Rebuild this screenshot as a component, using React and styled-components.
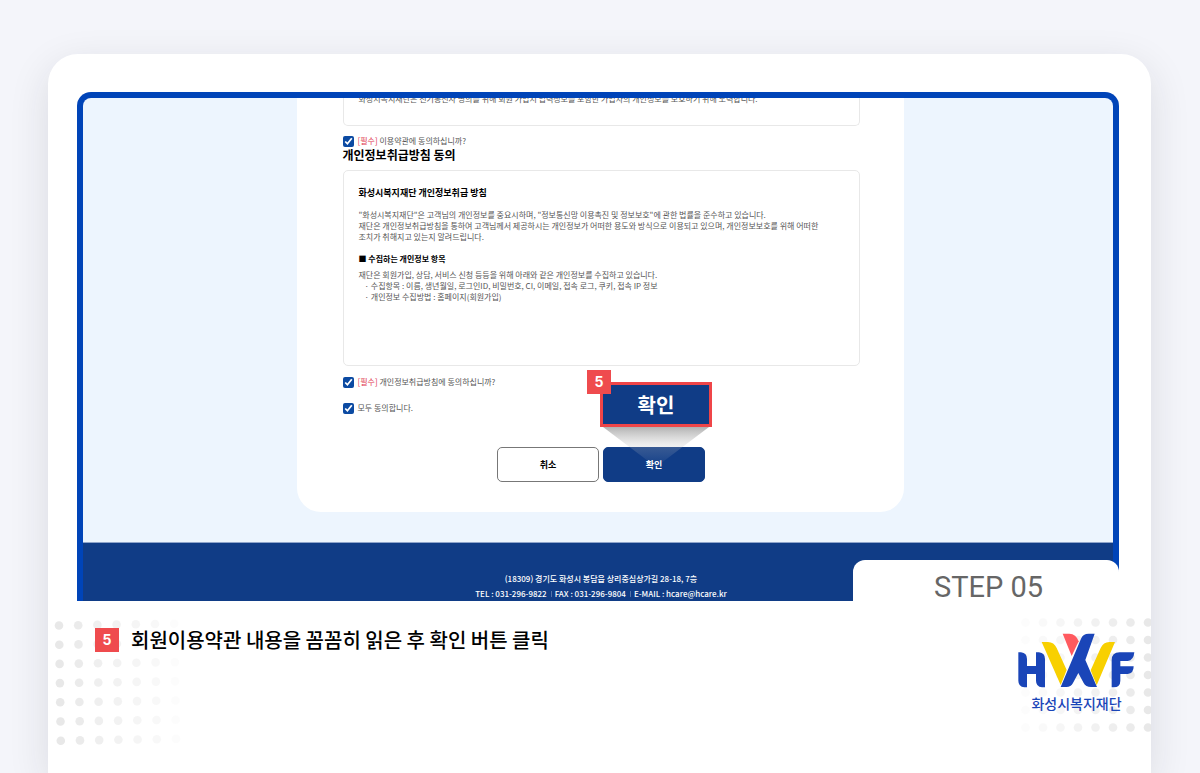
import React, { useState } from 'react';
import styled, { createGlobalStyle } from 'styled-components';

const GlobalStyle = createGlobalStyle`
  * {
    box-sizing: border-box;
  }
  body {
    margin: 0;
    background: #f4f5fa;
    font-family: 'Noto Sans CJK KR', 'Noto Sans', sans-serif;
    color: #000;
  }
  p, h2, h3, h4, ul {
    margin: 0;
    padding: 0;
    list-style: none;
  }
  button {
    font-family: inherit;
    padding: 0;
    cursor: pointer;
  }
`;

const Page = styled.main`
  padding: 54px 49px 0 48px;
  height: 100vh;
  overflow: hidden;
`;

const Card = styled.section`
  position: relative;
  min-height: 100%;
  padding-top: 38px;
  background: #fff;
  border-radius: 30px 30px 0 0;
  box-shadow: 0 12px 40px rgba(30, 30, 40, 0.12);
`;

const Dots = styled.svg`
  position: absolute;
  top: 562px;
  ${(props) => props.$side}: 0;
`;

const Screen = styled.div`
  position: relative;
  margin: 0 32px 0 29px;
  border: 6px solid #0044b8;
  border-bottom: 0;
  border-radius: 14px 14px 0 0;
  background: #0044b8;
`;

const ScreenBody = styled.div`
  display: flex;
  justify-content: center;
  padding: 0 0 30px 4px;
  background: #edf5fe;
  border-radius: 8px 8px 0 0;
`;

const Panel = styled.form`
  display: flex;
  flex-direction: column;
  width: 607px;
  padding: 0 44px 30px 46px;
  background: #fff;
  border-radius: 0 0 24px 24px;
`;

const Terms = styled.div`
  border: 1px solid #e8e8e8;
  border-radius: 5px;
  padding: 15px;
  font-size: 8px;
  line-height: 11px;
  color: #555;
`;

const TermsTail = styled(Terms)`
  display: flex;
  flex-direction: column;
  justify-content: flex-end;
  height: 28px;
  margin-bottom: 9px;
  padding-top: 0;
  padding-bottom: 21px;
  border-top: 0;
  border-radius: 0 0 5px 5px;
  overflow: hidden;
`;

const TermsFull = styled(Terms)`
  height: 196px;
  margin: 7px 0 10px;
`;

const SectionTitle = styled.h2`
  font-size: 12px;
  line-height: 16px;
`;

const TermsTitle = styled.h3`
  margin-bottom: 9px;
  font-size: 9px;
  line-height: 14px;
  color: #000;
`;

const TermsSubTitle = styled.h4`
  margin: 11px 0 5px;
  font-size: 8px;
  line-height: 11px;
  color: #000;
`;

const TermsList = styled.ul`
  padding-left: 6px;
`;

const Agree = styled.label`
  display: flex;
  align-items: center;
  gap: 4px;
  height: 12px;
  margin-bottom: ${(props) => props.$gap || 0}px;
  font-size: 8px;
  line-height: 12px;
  color: #555;

  input {
    width: 11px;
    height: 11px;
    margin: 0;
    accent-color: #0b4aa2;
  }
  em {
    font-style: normal;
    color: #e0364c;
  }
`;

const Buttons = styled.div`
  display: flex;
  justify-content: center;
  gap: 4px;
  margin-top: 33px;
`;

const FormButton = styled.button`
  width: 102px;
  height: 35px;
  border: 1px solid ${(props) => (props.$primary ? '#103c86' : '#777')};
  border-radius: 5px;
  background: ${(props) => (props.$primary ? '#103c86' : '#fff')};
  color: ${(props) => (props.$primary ? '#fff' : '#000')};
  font-size: 9px;
  font-weight: 700;
`;

const ConfirmWrap = styled.div`
  position: relative;
`;

const Beam = styled.svg`
  position: absolute;
  left: 0;
  bottom: 15px;
  pointer-events: none;
`;

const Callout = styled.button`
  position: absolute;
  left: -3px;
  bottom: 55px;
  width: 112px;
  height: 45px;
  border: 3px solid #ef4548;
  background: #103c86;
  color: #fff;
  font-size: 20px;
  font-weight: 700;
  line-height: 24px;
`;

const Badge = styled.span`
  display: flex;
  align-items: center;
  justify-content: center;
  width: 24px;
  height: 24px;
  background: #ef4b4e;
  color: #fff;
  font-family: Inter, 'Noto Sans', sans-serif;
  font-size: 14px;
  font-weight: 700;
  line-height: 20px;
`;

const CalloutBadge = styled(Badge)`
  position: absolute;
  left: -16px;
  bottom: 88px;
`;

const ScreenFooter = styled.footer`
  height: 59px;
  padding: 28px 0 0 6px;
  border-top: 1px solid #8fa5cb;
  background: #103c86;
  color: #fff;
  font-size: 8px;
  font-weight: 500;
  line-height: 15px;
  text-align: center;

  a {
    color: inherit;
    text-decoration: none;
  }
`;

const Contact = styled.div`
  display: flex;
  justify-content: center;

  span + span {
    margin-left: 4px;
    padding-left: 4px;
    background: linear-gradient(#5473a8, #5473a8) 0 5px / 1px 6px no-repeat;
  }
`;

const StepTab = styled.div`
  position: absolute;
  right: -6px;
  bottom: 0;
  width: 266px;
  height: 41px;
  padding-left: 5px;
  border-radius: 12px 12px 0 0;
  background: #fff;
  color: #666;
  font-family: Roboto, 'Noto Sans CJK KR', sans-serif;
  font-size: 29px;
  line-height: 54px;
  text-align: center;
`;

const Guide = styled.div`
  position: relative;
  display: flex;
  justify-content: space-between;
  padding: 26px 16px 0 47px;
`;

const GuideText = styled.p`
  display: flex;
  align-items: center;
  gap: 12px;
  height: 25px;
  font-size: 20px;
  font-weight: 500;
  line-height: 25px;
`;

const Brand = styled.div`
  display: flex;
  flex-direction: column;
  align-items: center;
  gap: 5px;
  padding-top: 6px;
  color: #1a45b8;
  font-size: 14px;
  font-weight: 500;
  line-height: 20px;
`;

const DotGrid = ({ side, width, step, cols, startX, startY, skew }) => {
  const dots = [];
  for (let row = 0; row < 7; row++) {
    for (let col = 0; col < cols; col++) {
      const x = startX + col * step + row * skew;
      dots.push(
        <circle
          key={`${row}-${col}`}
          cx={side === 'left' ? x : width - x}
          cy={startY + row * step - col * skew}
          r='4.3'
          fill='#e8e8e8'
          opacity={1 - col / cols}
        />
      );
    }
  }
  return (
    <Dots $side={side} width={width} height='140' aria-hidden='true'>
      {dots}
    </Dots>
  );
};

const Logo = () => (
  <svg width='117' height='55' viewBox='56 55 351 165' role='img' aria-label='HWF'>
    <g fill='#1a45b8'>
      <path d='M57 113h8q18 2 18 20v21h27v-41h9q18 2 18 20v85h-9q-18-2-18-20v-20H83v40h-8q-18-2-18-20z' />
      <path d='M286 57h-18q-17 0-23 15L184 217h17q14 0 20-12l16-30 16 30q6 12 22 12h18l-35-81z' />
      <path d='M405 113h-44q-24 0-24 24v81h6q20-1 20-20v-20h22q18-1 18-23h-40v-16h22q18-2 20-26z' />
    </g>
    <path fill='#ff5a5f' d='M190 57h20q20 0 28 23l-21 44z' />
    <path fill='#f8d000' d='M127 82h19q18 0 26 18l30 66-18 45zM347 82h-17q-18 0-26 18l-30 67 18 45z' />
  </svg>
);

const App = () => {
  const [agree, setAgree] = useState({ terms: true, privacy: true, all: true });

  const toggle = (e) => setAgree({ ...agree, [e.target.name]: e.target.checked });

  return (
    <>
      <GlobalStyle />
      <Page>
        <Card>
          <DotGrid side='left' width={140} step={19.2} cols={7} startX={11} startY={9.5} skew={0.3} />
          <DotGrid side='right' width={140} step={17.5} cols={8} startX={3} startY={6.5} skew={0} />
          <Screen>
            <ScreenBody>
              <Panel onSubmit={(e) => e.preventDefault()}>
                <TermsTail>화성시복지재단은 전기통신사 명의를 위해 회원 가입시 입력정보를 포함한 가입자의 개인정보를 보호하기 위해 노력합니다.</TermsTail>
                <Agree>
                  <input type='checkbox' name='terms' checked={agree.terms} onChange={toggle} />
                  <span>
                    <em>[필수]</em> 이용약관에 동의하십니까?
                  </span>
                </Agree>
                <SectionTitle>개인정보취급방침 동의</SectionTitle>
                <TermsFull>
                  <TermsTitle>화성시복지재단 개인정보취급 방침</TermsTitle>
                  <p>"화성시복지재단"은 고객님의 개인정보를 중요시하며, "정보통신망 이용촉진 및 정보보호"에 관한 법률을 준수하고 있습니다.</p>
                  <p>
                    재단은 개인정보취급방침을 통하여 고객님께서 제공하시는 개인정보가 어떠한 용도와 방식으로 이용되고 있으며, 개인정보보호를 위해 어떠한
                    <br />
                    조치가 취해지고 있는지 알려드립니다.
                  </p>
                  <TermsSubTitle>■ 수집하는 개인정보 항목</TermsSubTitle>
                  <p>재단은 회원가입, 상담, 서비스 신청 등등을 위해 아래와 같은 개인정보를 수집하고 있습니다.</p>
                  <TermsList>
                    <li>· 수집항목 : 이름, 생년월일, 로그인ID, 비밀번호, CI, 이메일, 접속 로그, 쿠키, 접속 IP 정보</li>
                    <li>· 개인정보 수집방법 : 홈페이지(회원가입)</li>
                  </TermsList>
                </TermsFull>
                <Agree $gap={14}>
                  <input type='checkbox' name='privacy' checked={agree.privacy} onChange={toggle} />
                  <span>
                    <em>[필수]</em> 개인정보취급방침에 동의하십니까?
                  </span>
                </Agree>
                <Agree>
                  <input type='checkbox' name='all' checked={agree.all} onChange={toggle} />
                  <span>모두 동의합니다.</span>
                </Agree>
                <Buttons>
                  <FormButton type='button'>취소</FormButton>
                  <ConfirmWrap>
                    <FormButton type='submit' $primary>
                      확인
                    </FormButton>
                    <Beam width='106' height='40' viewBox='0 0 106 40' aria-hidden='true'>
                      <defs>
                        <linearGradient id='beam' x1='0' y1='0' x2='0' y2='1'>
                          <stop offset='0' stopColor='#888' stopOpacity='0.65' />
                          <stop offset='0.45' stopColor='#bbb' stopOpacity='0.25' />
                          <stop offset='1' stopColor='#ddd' stopOpacity='0' />
                        </linearGradient>
                      </defs>
                      <polygon points='0,0 106,0 53,40' fill='url(#beam)' />
                    </Beam>
                    <Callout type='submit'>확인</Callout>
                    <CalloutBadge>5</CalloutBadge>
                  </ConfirmWrap>
                </Buttons>
              </Panel>
            </ScreenBody>
            <ScreenFooter>
              <p>(18309) 경기도 화성시 봉담읍 상리중심상가길 28-18, 7층</p>
              <Contact>
                <span>TEL : 031-296-9822</span>
                <span>FAX : 031-296-9804</span>
                <span>
                  E-MAIL : <a href='mailto:hcare@hcare.kr'>hcare@hcare.kr</a>
                </span>
              </Contact>
            </ScreenFooter>
            <StepTab>STEP 05</StepTab>
          </Screen>
          <Guide>
            <GuideText>
              <Badge>5</Badge>
              회원이용약관 내용을 꼼꼼히 읽은 후 확인 버튼 클릭
            </GuideText>
            <Brand>
              <Logo />
              화성시복지재단
            </Brand>
          </Guide>
        </Card>
      </Page>
    </>
  );
};

export default App;
